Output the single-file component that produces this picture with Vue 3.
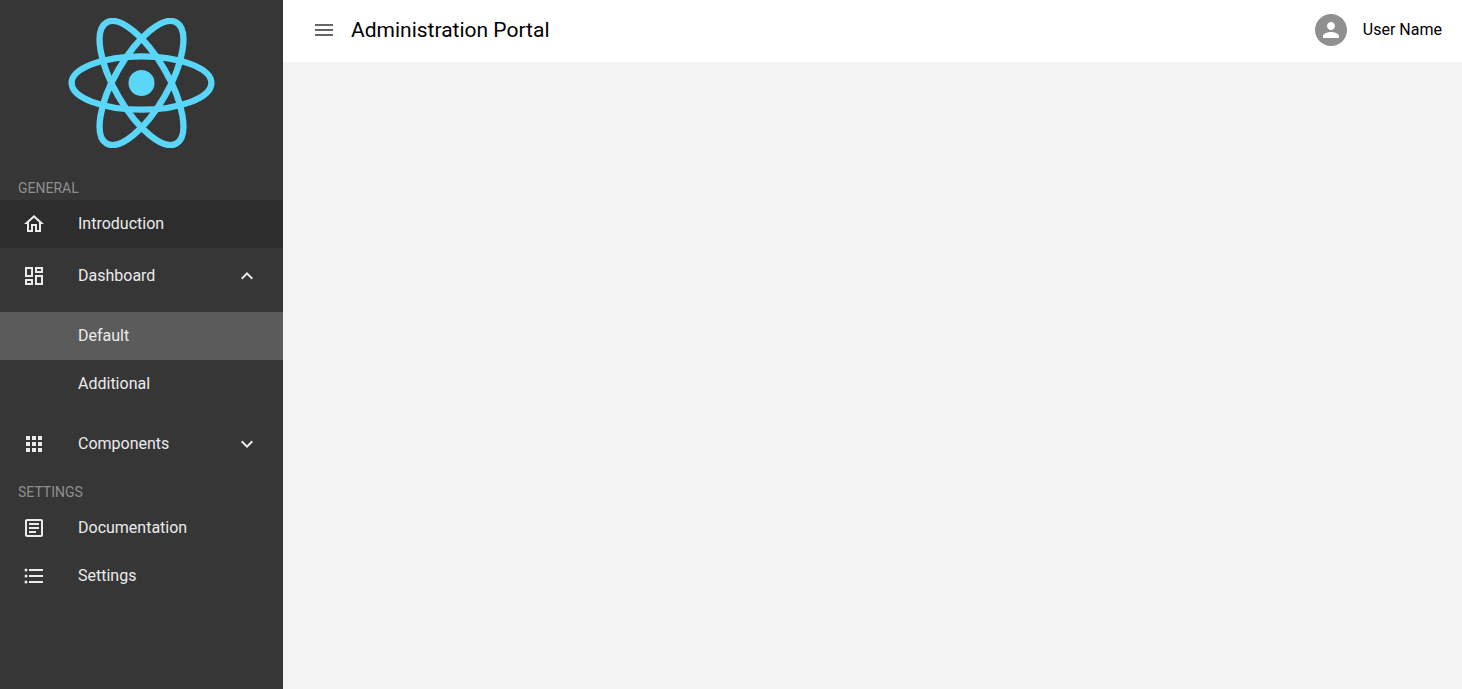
<script setup>
import { ref } from 'vue'

const sidebarOpen = ref(true)
const dashboardOpen = ref(true)
</script>

<template>
  <div class="layout">
    <aside v-show="sidebarOpen" class="sidebar">
      <div class="brand">
        <svg class="logo" viewBox="-11.5 -10.23174 23 20.46348" role="img" aria-label="React">
          <circle r="2.05" fill="#5ad6f9" />
          <g fill="none" stroke="#5ad6f9">
            <ellipse rx="11" ry="4.2" />
            <ellipse rx="11" ry="4.2" transform="rotate(60)" />
            <ellipse rx="11" ry="4.2" transform="rotate(120)" />
          </g>
        </svg>
      </div>

      <nav aria-label="Main">
        <h2 class="caption">GENERAL</h2>
        <a class="item hovered" href="#introduction">
          <svg class="icon" viewBox="0 0 24 24" aria-hidden="true"><path d="M12 5.69l5 4.5V18h-2v-6H9v6H7v-7.81l5-4.5M12 3L2 12h3v8h6v-6h2v6h6v-8h3L12 3z" /></svg>
          <span class="text">Introduction</span>
        </a>

        <div class="group">
          <button class="item" type="button" :aria-expanded="dashboardOpen" @click="dashboardOpen = !dashboardOpen">
            <svg class="icon" viewBox="0 0 24 24" aria-hidden="true"><path d="M19 5v2h-4V5h4M9 5v6H5V5h4m10 8v6h-4v-6h4M9 17v2H5v-2h4M21 3h-8v6h8V3zM11 3H3v10h8V3zm10 8h-8v10h8V11zm-10 4H3v6h8v-6z" /></svg>
            <span class="text">Dashboard</span>
            <svg class="chevron" viewBox="0 0 24 24" aria-hidden="true"><path v-if="dashboardOpen" d="M12 8l-6 6 1.41 1.41L12 10.83l4.59 4.58L18 14z" /><path v-else d="M7.41 8.59L12 13.17l4.59-4.58L18 10l-6 6-6-6 1.41-1.41z" /></svg>
          </button>
          <div v-show="dashboardOpen" class="submenu">
            <a class="item child selected" href="#default" aria-current="page">Default</a>
            <a class="item child" href="#additional">Additional</a>
          </div>
          <button class="item" type="button" aria-expanded="false">
            <svg class="icon" viewBox="0 0 24 24" aria-hidden="true"><path d="M4 8h4V4H4v4zm6 12h4v-4h-4v4zm-6 0h4v-4H4v4zm0-6h4v-4H4v4zm6 0h4v-4h-4v4zm6-10v4h4V4h-4zm-6 4h4V4h-4v4zm6 6h4v-4h-4v4zm0 6h4v-4h-4v4z" /></svg>
            <span class="text">Components</span>
            <svg class="chevron" viewBox="0 0 24 24" aria-hidden="true"><path d="M7.41 8.59L12 13.17l4.59-4.58L18 10l-6 6-6-6 1.41-1.41z" /></svg>
          </button>
        </div>

        <h2 class="caption">SETTINGS</h2>
        <a class="item" href="#documentation">
          <svg class="icon" viewBox="0 0 24 24" aria-hidden="true"><path d="M19 5v14H5V5h14m0-2H5c-1.1 0-2 .9-2 2v14c0 1.1.9 2 2 2h14c1.1 0 2-.9 2-2V5c0-1.1-.9-2-2-2zM7 7h10v2H7V7zm0 4h10v2H7v-2zm0 4h7v2H7v-2z" /></svg>
          <span class="text">Documentation</span>
        </a>
        <a class="item" href="#settings">
          <svg class="icon" viewBox="0 0 24 24" aria-hidden="true">
            <path d="M7 5h14v2H7V5zm0 6h14v2H7v-2zm0 6h14v2H7v-2z" />
            <circle cx="4" cy="6" r="1.5" />
            <circle cx="4" cy="12" r="1.5" />
            <circle cx="4" cy="18" r="1.5" />
          </svg>
          <span class="text">Settings</span>
        </a>
      </nav>
    </aside>

    <div class="page">
      <header class="topbar">
        <button class="menu" type="button" aria-label="Toggle menu" @click="sidebarOpen = !sidebarOpen">
          <svg viewBox="0 0 24 24" aria-hidden="true"><path d="M3 18h18v-2H3v2zm0-5h18v-2H3v2zm0-7v2h18V6H3z" /></svg>
        </button>
        <h1>Administration Portal</h1>
        <button class="user" type="button">
          <span class="avatar"><svg viewBox="0 0 24 24" aria-hidden="true"><path d="M12 12c2.21 0 4-1.79 4-4s-1.79-4-4-4-4 1.79-4 4 1.79 4 4 4zm0 2c-2.67 0-8 1.34-8 4v2h16v-2c0-2.66-5.33-4-8-4z" /></svg></span>
          <span>User Name</span>
        </button>
      </header>
      <main></main>
    </div>
  </div>
</template>

<style>
body {
  margin: 0;
}
</style>

<style scoped>
.layout {
  display: flex;
  min-height: 100vh;
  background: #f3f3f3;
  font-family: Roboto, "Liberation Sans", sans-serif;
  font-size: 16px;
  line-height: 24px;
}

svg {
  display: block;
  fill: currentColor;
}

button {
  border: 0;
  background: none;
  font: inherit;
  color: inherit;
  cursor: pointer;
}

.sidebar {
  flex: 0 0 283px;
  background: #363636;
  color: #ebebeb;
}

.brand {
  display: flex;
  justify-content: center;
  padding: 18px 0 28px;
}

.logo {
  width: 147px;
  height: 130px;
}

.caption {
  margin: 0;
  padding: 0 18px;
  font-size: 14px;
  font-weight: 400;
  color: #8f8f8f;
}

.item {
  display: flex;
  align-items: center;
  box-sizing: border-box;
  width: 100%;
  height: 48px;
  padding: 0 24px 0 22px;
  color: inherit;
  text-align: left;
  text-decoration: none;
}

.hovered {
  background: #2d2d2d;
}

.selected {
  background: #5b5b5b;
}

.child {
  padding-left: 78px;
}

.icon {
  width: 24px;
  height: 24px;
  margin-right: 32px;
}

.text {
  flex: 1;
}

.chevron {
  width: 24px;
  height: 24px;
}

.group {
  padding: 4px 0 12px;
}

.submenu {
  padding: 12px 0;
}

.page {
  flex: 1;
  min-width: 0;
}

.topbar {
  display: flex;
  align-items: center;
  box-sizing: border-box;
  height: 62px;
  padding: 0 20px 2px 29px;
  background: #fff;
  color: #000;
}

.menu {
  padding: 0;
  color: #666;
}

.menu svg {
  width: 24px;
  height: 24px;
}

h1 {
  margin: 0 auto 0 15px;
  font-size: 21px;
  font-weight: 400;
  line-height: 28px;
}

.user {
  display: flex;
  align-items: center;
  gap: 16px;
  padding: 0;
}

.avatar {
  display: grid;
  place-items: center;
  width: 32px;
  height: 32px;
  border-radius: 50%;
  background: #8f8f8f;
  color: #fff;
}

.avatar svg {
  width: 24px;
  height: 24px;
}
</style>
